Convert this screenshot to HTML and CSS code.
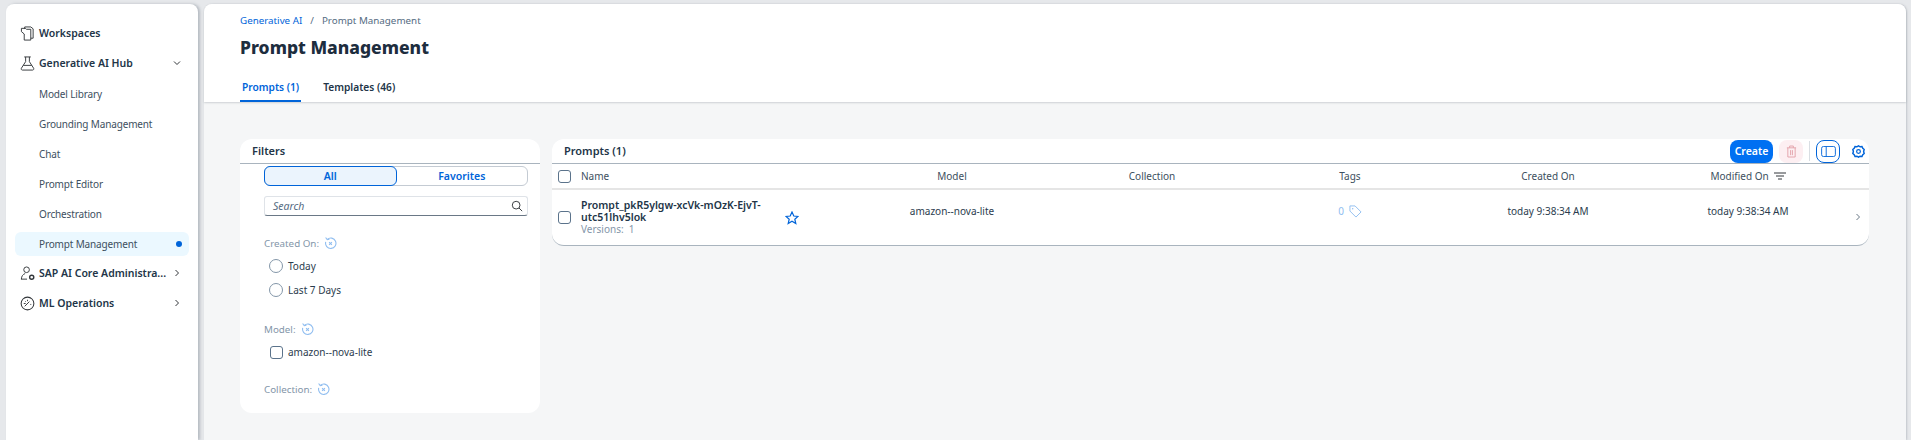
FILE: index.html
```html
<!DOCTYPE html>
<html lang="en">
<head>
<meta charset="utf-8">
<title>Prompt Management</title>
<link rel="stylesheet" href="styles.css">
</head>
<body>
<div class="shell">
  <nav class="side">
    <div class="nav-row top">
      <svg class="nav-ico" viewBox="0 0 16 16"><path d="M5 3V1h6.500L14 3v10h-2.500M1.500 2.500h4.300l1 1h4.700V15H4.500V8.500L1.500 6z" fill="none" stroke="#32363a" stroke-width="1"/></svg>
      <span class="nav-label">Workspaces</span>
    </div>
    <div class="nav-row top">
      <svg class="nav-ico" viewBox="0 0 16 16"><path d="M4.500 1h7M6 1v5L1.500 13c-.5 1 0 2 1 2h11c1 0 1.500-1 1-2L10 6V1M3.500 10h9" fill="none" stroke="#32363a" stroke-width="1"/></svg>
      <span class="nav-label">Generative AI Hub</span>
      <svg class="nav-arrow" viewBox="0 0 10 10"><path d="M2 3.500l3 3 3-3" fill="none" stroke="#32363a" stroke-width="1"/></svg>
    </div>
    <div class="nav-row sub">Model Library</div>
    <div class="nav-row sub">Grounding Management</div>
    <div class="nav-row sub">Chat</div>
    <div class="nav-row sub">Prompt Editor</div>
    <div class="nav-row sub">Orchestration</div>
    <div class="nav-row sub current"><span>Prompt Management</span><i class="dot"></i></div>
    <div class="nav-row top">
      <svg class="nav-ico" viewBox="0 0 16 16"><circle cx="7" cy="4" r="3" fill="none" stroke="#32363a"/><path d="M1.500 14c0-3 1.500-5 4-6M1 14h6.500" fill="none" stroke="#32363a"/><circle cx="12.500" cy="12" r="2.200" fill="none" stroke="#32363a" stroke-width="1.500"/></svg>
      <span class="nav-label">SAP AI Core Administra...</span>
      <svg class="nav-arrow" viewBox="0 0 10 10"><path d="M3.500 2l3 3-3 3" fill="none" stroke="#32363a" stroke-width="1"/></svg>
    </div>
    <div class="nav-row top">
      <svg class="nav-ico" viewBox="0 0 16 16"><circle cx="8" cy="8" r="6.800" fill="none" stroke="#32363a" stroke-width="1.100"/><path d="M5 11l5-5M4 8h2M8 4v1.500M11 9h1M5.500 5.500l.7.7" fill="none" stroke="#32363a"/></svg>
      <span class="nav-label">ML Operations</span>
      <svg class="nav-arrow" viewBox="0 0 10 10"><path d="M3.500 2l3 3-3 3" fill="none" stroke="#32363a" stroke-width="1"/></svg>
    </div>
  </nav>

  <main class="main">
    <header class="head">
      <div class="crumbs"><a class="crumb-link">Generative AI</a><span class="crumb-sep">/</span><span>Prompt Management</span></div>
      <h1 class="title">Prompt Management</h1>
      <div class="tabs">
        <div class="tab active">Prompts (1)</div>
        <div class="tab">Templates (46)</div>
      </div>
    </header>

    <div class="content">
      <section class="filters">
        <div class="card-head">Filters</div>
        <div class="filter-body">
          <div class="segment">
            <div class="seg on">All</div>
            <div class="seg">Favorites</div>
          </div>
          <div class="search">
            <span class="search-text">Search</span>
            <svg class="search-ico" viewBox="0 0 14 14"><circle cx="6" cy="6" r="4.500" fill="none" stroke="#32363a" stroke-width="1.100"/><path d="M9.300 9.300L13 13" stroke="#32363a" stroke-width="1.100"/></svg>
          </div>
          <div class="f-label first">Created On:<svg class="reset" viewBox="0 0 12 12"><use href="#reset"/></svg></div>
          <label class="opt"><i class="radio"></i>Today</label>
          <label class="opt"><i class="radio"></i>Last 7 Days</label>
          <div class="f-label model">Model:<svg class="reset" viewBox="0 0 12 12"><use href="#reset"/></svg></div>
          <label class="opt"><i class="check"></i>amazon--nova-lite</label>
          <div class="f-label coll">Collection:<svg class="reset" viewBox="0 0 12 12"><use href="#reset"/></svg></div>
        </div>
      </section>

      <section class="table">
        <div class="card-head tbl-head">
          <span>Prompts (1)</span>
          <div class="tools">
            <button class="btn-create">Create</button>
            <button class="btn-del"><svg viewBox="0 0 12 14" class="trash"><path d="M1 3h10M4 3V1h4v2M2 3v10h8V3M5 5.500V11M7 5.500V11" fill="none" stroke="#e3a0a8"/></svg></button>
            <i class="sep"></i>
            <button class="btn-panel"><svg viewBox="0 0 16 12" class="panel"><rect x=".5" y=".5" width="15" height="11" rx="2" fill="none" stroke="#0064d9"/><path d="M5.500 .5v11" stroke="#0064d9"/></svg></button>
            <svg viewBox="0 0 16 16" class="gear"><path d="M8 1l2 1.200 2.300-.2 1 2 1.700 1.500-.7 2.500.7 2.500-1.700 1.500-1 2-2.300-.2L8 15l-2-1.200-2.300.2-1-2L1 10.500 1.700 8 1 5.500 2.700 4l1-2 2.300.2z" fill="none" stroke="#0064d9" stroke-width="1.800"/><circle cx="8" cy="8" r="2.300" fill="none" stroke="#0064d9" stroke-width="1.500"/></svg>
          </div>
        </div>
        <div class="grid colhead">
          <div class="c-check"><i class="check"></i></div>
          <div class="c-name">Name</div>
          <div class="c-star"></div>
          <div class="c-mid">Model</div>
          <div class="c-mid">Collection</div>
          <div class="c-mid">Tags</div>
          <div class="c-mid">Created On</div>
          <div class="c-mid">Modified On<svg class="sort" viewBox="0 0 12 8"><path d="M0 1h12M2 4h8M4 7h4" stroke="#32363a"/></svg></div>
          <div></div>
        </div>
        <div class="grid row">
          <div class="c-check"><i class="check"></i></div>
          <div class="c-name">
            <div class="p-name">Prompt_pkR5ylgw-xcVk-mOzK-EjvT-utc51lhv5lok</div>
            <div class="p-ver">Versions:&nbsp; 1</div>
          </div>
          <div class="c-star"><svg class="star" viewBox="0 0 14 14"><path d="M7 1l1.800 4 4.200.4-3.200 2.800 1 4.300L7 10.200 3.200 12.500l1-4.300L1 5.400 5.200 5z" fill="none" stroke="#0064d9" stroke-width="1.200"/></svg></div>
          <div class="c-mid up">amazon--nova-lite</div>
          <div class="c-mid up"></div>
          <div class="c-mid up tag">0<svg class="tag-ico" viewBox="0 0 14 14"><path d="M1 1h5.500l6.500 6.500-5.500 5.500L1 6.500z" fill="none" stroke="#8fbdf0"/><circle cx="4" cy="4" r=".8" fill="#8fbdf0"/></svg></div>
          <div class="c-mid up">today 9:38:34 AM</div>
          <div class="c-mid up">today 9:38:34 AM</div>
          <div class="c-nav"><svg viewBox="0 0 10 10" class="row-arrow"><path d="M3.500 2l3 3-3 3" fill="none" stroke="#6a7886"/></svg></div>
        </div>
      </section>
    </div>
  </main>
</div>
<svg class="defs" aria-hidden="true"><defs><g id="reset" fill="none" stroke="#8fbdf0"><path d="M3 2.200A4.800 4.800 0 1 1 1.600 4.500"/><path d="M1.500 .5L3 2.500 5 2"/><path d="M4.700 4.700l2.600 2.600M7.300 4.700L4.700 7.300"/></g></defs></svg>
</body>
</html>
```
FILE: styles.css
```css
* { box-sizing: border-box; }
html, body { margin: 0; height: 100%; }
body {
  background: #e6e8eb;
  font-family: "Noto Sans", "Liberation Sans", sans-serif;
  color: #223548;
  overflow: hidden;
}
.defs { width: 0; height: 0; position: absolute; }
.shell { display: flex; height: 440px; padding: 4px 5px 0 6px; gap: 6px; }

.side {
  width: 192px;
  flex: none;
  background: #fff;
  border-radius: 8px 8px 0 0;
  padding: 15px 9px 0;
  box-shadow: 2px 0 3px rgba(90, 100, 115, .35);
}
.nav-row { height: 30px; display: flex; align-items: center; font-size: 10.500px; white-space: nowrap; }
.nav-row.top { padding: 0 0 2px 5px; font-weight: 600; color: #223548; }
.nav-ico { width: 15px; height: 15px; margin-right: 4px; flex: none; }
.nav-label { flex: 1; }
.nav-arrow { width: 10px; height: 10px; margin-right: 7px; flex: none; }
.sub { padding-left: 24px; color: #3d4f60; font-size: 10px; letter-spacing: -.15px; }
.current { background: #ebf8ff; border-radius: 6px; height: 24px; margin: 3px 0; justify-content: space-between; padding-right: 7px; }
.dot { width: 6px; height: 6px; border-radius: 50%; background: #0064d9; }

.main { flex: 1; display: flex; flex-direction: column; background: #f5f6f7; border-radius: 8px 8px 0 0; min-width: 0; box-shadow: 1px 0 2px rgba(90, 100, 115, .25); }
.head {
  height: 98px;
  background: #fff;
  border-radius: 8px 8px 0 0;
  padding: 10px 0 0 36px;
  box-shadow: 0 1px 2px rgba(50, 60, 75, .2);
}
.crumbs { font-size: 9.800px; color: #556b82; height: 13px; line-height: 13px; }
.crumb-link { color: #0064d9; }
.crumb-sep { margin: 0 8px; }
.title { margin: 9px 0 0; font: 800 17.500px/22px "Noto Sans", "Liberation Sans", sans-serif; color: #1d2d3e; }
.tabs { display: flex; margin-top: 19px; gap: 22px; }
.tab { font-size: 10.200px; font-weight: 600; height: 25px; line-height: 20px; color: #223548; }
.tab.active { color: #0064d9; border-bottom: 2px solid #0064d9; padding: 0 2px; }

.content { flex: 1; display: flex; gap: 12px; padding: 37px 0 0 36px; align-items: flex-start; }
.filters { width: 300px; height: 274px; background: #fff; border-radius: 12px; flex: none; }
.card-head {
  height: 25px;
  padding-left: 12px;
  border-bottom: 1px solid #a9b4be;
  font-size: 11px;
  font-weight: 600;
  line-height: 24px;
  color: #223548;
}
.filter-body { padding: 2px 12px 0 24px; }
.segment { display: flex; height: 20px; border: 1px solid #c4cbd3; border-radius: 6px; background: #fff; }
.seg { flex: 1; text-align: center; font-size: 10.500px; font-weight: 600; line-height: 18px; color: #0064d9; }
.seg.on { background: #ebf4fd; border: 1px solid #0064d9; border-radius: 6px; margin: -1px 0 -1px -1px; line-height: 18px; }
.search {
  display: flex; justify-content: space-between; align-items: center;
  height: 20px; margin-top: 10px; padding: 0 4px 0 8px;
  border: 1px solid #dfe3e8; border-bottom-color: #6a7886; border-radius: 3px;
}
.search-text { font-size: 10.500px; font-style: italic; color: #556b82; }
.search-ico { width: 12px; height: 12px; }
.f-label { display: flex; align-items: center; gap: 5px; font-size: 9.800px; color: #8496a9; height: 14px; }
.f-label.first { margin-top: 20px; }
.f-label.model { margin-top: 20px; }
.f-label.coll { margin-top: 18px; }
.reset { width: 13px; height: 13px; }
.opt { display: flex; align-items: center; gap: 5px; height: 24px; font-size: 10px; color: #2b3c4e; padding-left: 5px; }
.f-label + .opt { margin-top: 4px; }
.radio { width: 14px; height: 14px; border-radius: 50%; border: 1px solid #8396a8; background: #fff; }
.check { display: block; width: 13px; height: 13px; border-radius: 3px; border: 1px solid #5b738b; background: #fff; }
.opt .check { margin: 0 0 0 1px; }

.table { flex: none; width: 1317px; background: #fff; border-radius: 12px; overflow: hidden; border-bottom: 1px solid #a9b4be; }
.tbl-head { display: flex; justify-content: space-between; align-items: center; padding-right: 0; }
.tools { display: flex; align-items: center; }
.tools button { border: 0; padding: 0; display: flex; align-items: center; justify-content: center; }
.btn-create { width: 43px; height: 23px; border-radius: 8px; background: #0070f2; color: #fff; font: 600 10.500px "Noto Sans", "Liberation Sans", sans-serif; }
.btn-del { width: 24px; height: 23px; border-radius: 8px; background: #fdeff2; margin-left: 6px; }
.trash { width: 11px; height: 13px; }
.sep { width: 1px; height: 20px; background: #d9dee3; margin: 0 6px; }
.btn-panel { width: 24px; height: 23px; border-radius: 8px; background: #fff; border: 1px solid #0064d9 !important; }
.panel { width: 15px; height: 11px; }
.gear { width: 13px; height: 13px; margin: 0 4px 0 12px; }

.grid { display: grid; grid-template-columns: 30px 200px 70px 200px 200px 196px 200px 200px 1fr; align-items: center; }
.colhead { height: 26px; border-bottom: 2px solid #e5e5e5; font-size: 10px; color: #3d4f60; }
.row { height: 55px; font-size: 10px; color: #2b3c4e; }
.c-check { padding-left: 6px; }
.c-name { margin-left: -1px; }
.c-mid { text-align: center; display: flex; justify-content: center; align-items: center; gap: 5px; }
.up { margin-top: -13px; }
.p-name { font-size: 10.500px; font-weight: 600; line-height: 12px; color: #223548; }
.p-ver { color: #8496a9; line-height: 13px; }
.c-star { padding-left: 3px; }
.star { display: block; width: 14px; height: 14px; }
.sort { width: 12px; height: 8px; }
.tag { color: #8fbdf0; }
.tag-ico { width: 13px; height: 13px; }
.c-nav { text-align: right; padding-right: 6px; }
.row-arrow { width: 10px; height: 10px; }
```
